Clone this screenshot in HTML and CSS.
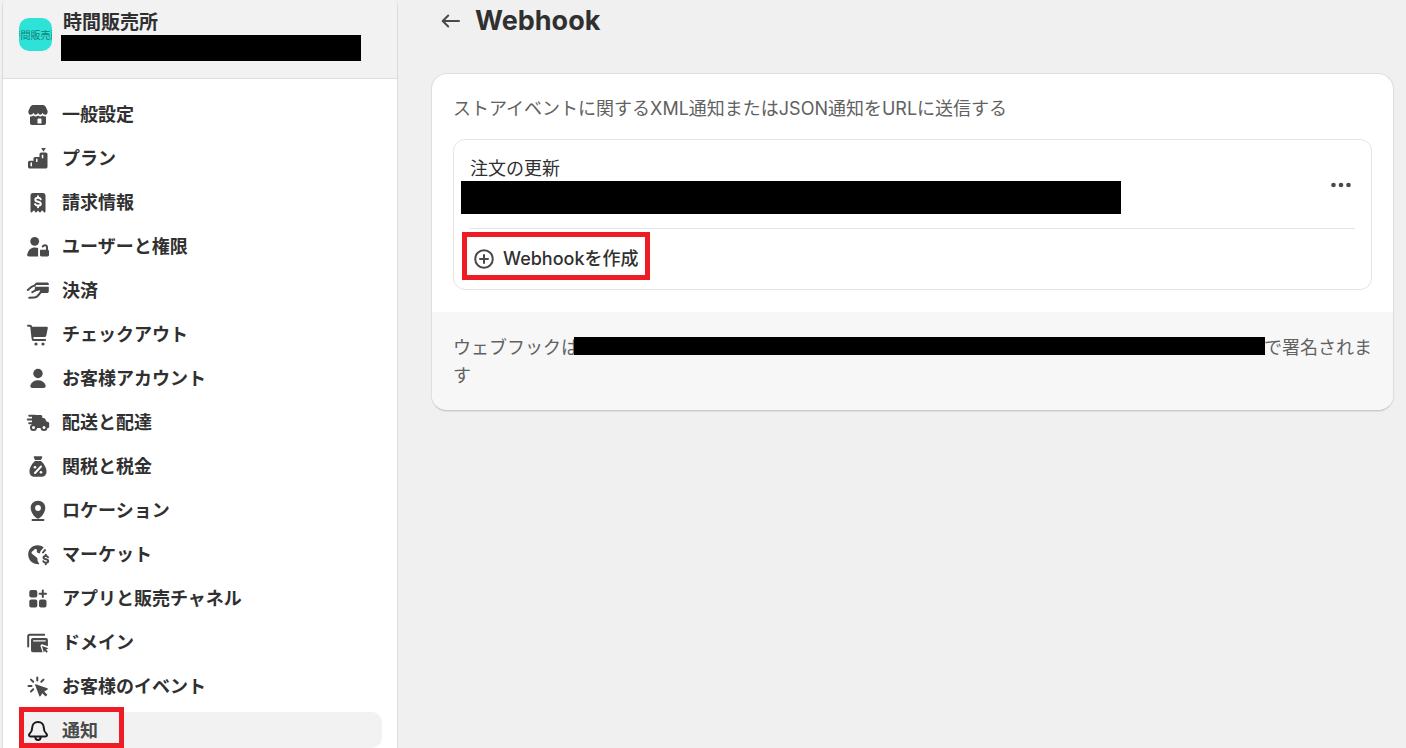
FILE: index.html
```html
<!DOCTYPE html>
<html lang="ja">
<head>
    <meta charset="UTF-8">
    <meta name="viewport" content="width=device-width, initial-scale=1.0">
    <title>Webhook</title>
    <link rel="stylesheet" href="styles.css">
</head>
<body>

<div class="layout">
    <aside class="sidebar">
        <div class="store">
            <div class="avatar"><span>時間販売所</span></div>
            <div class="store-info">
                <div class="store-name">時間販売所</div>
                <div class="mask mask-store"></div>
            </div>
        </div>

        <!-- Settings menu -->
        <nav class="menu">
            <a class="menu-item" href="#">
                <svg class="icon" viewBox="0 0 24 24"><path d="M8 3h8c1.800 0 3 .6 3.800 2l1.600 3.400c.8 2-.3 4.400-2.300 4.400-1.200 0-2-.7-2.500-2-.6 1.300-1.300 2-2.300 2s-1.800-.7-2.300-2c-.5 1.300-1.300 2-2.300 2s-1.700-.7-2.300-2c-.5 1.300-1.300 2-2.500 2-2 0-3.100-2.400-2.300-4.400L4.200 5C5 3.600 6.200 3 8 3z"/><path fill-rule="evenodd" d="M4 14.500c1.500.2 2.600-.2 3.400-1 1.400 1.300 3.200 1.300 4.600 0 1.400 1.300 3.200 1.300 4.600 0 .8.800 1.900 1.200 3.400 1V21c0 1.200-.8 2-2 2H6c-1.200 0-2-.8-2-2zM12.500 16.500c-.6 0-1 .4-1 1v4H15.500v-4c0-.6-.4-1-1-1z"/></svg>
                一般設定
            </a>
            <a class="menu-item" href="#">
                <svg class="icon" viewBox="0 0 24 24"><path d="M15.200 2h4.600l-2.300 3.800z"/><path fill-rule="evenodd" d="M2 16.500c0-1.100.7-1.800 1.800-1.800h3.700v-2c0-1.100.7-1.800 1.800-1.800h4.200V8.300c0-1.100.7-1.800 1.800-1.800h4.400c1.100 0 1.800.7 1.800 1.800v12.400c0 1.100-.7 1.800-1.800 1.800H3.800c-1.100 0-1.800-.7-1.800-1.800zM4.500 16.600v3.600h1.500v-3.600zM10 12.800v3.200h1.500v-3.200zM15.800 8.700v3.600h1.500v-3.600z"/></svg>
                プラン
            </a>
            <a class="menu-item" href="#">
                <svg class="icon" viewBox="0 0 24 24"><path d="M7 3h10c1.500 0 2.500 1 2.500 2.500v16.100c0 .8-.8 1.200-1.400.7L16 20.300l-1.500 2c-.3.400-.8.400-1.100 0L12 20.500l-1.400 1.800c-.3.400-.8.400-1.100 0l-1.500-2-2.100 2c-.6.500-1.400.1-1.400-.7V5.500C4.500 4 5.500 3 7 3z"/><path class="cut-line" d="M14.800 9.300c-.4-1-1.400-1.500-2.800-1.500-1.600 0-2.700.7-2.700 1.900 0 2.900 5.500 1.100 5.500 4 0 1.200-1.200 1.900-2.800 1.900-1.400 0-2.500-.5-2.900-1.500M12 6.200v1.500M12 15.700v1.500"/></svg>
                請求情報
            </a>
            <a class="menu-item" href="#">
                <svg class="icon" viewBox="0 0 24 24"><circle cx="8.700" cy="7.300" r="4.400"/><path d="M8.800 13.500c1.400 0 2.500.2 3.300.6v8.400H3c-1.300 0-2.100-1-1.800-2.100 1-4.200 3.900-6.900 7.600-6.900z"/><path d="M14.600 15.700h7c.8 0 1.400.6 1.400 1.400v4c0 .8-.6 1.400-1.400 1.400h-6.200c-.8 0-1.400-.6-1.400-1.400v-4c0-.8.200-1.400.6-1.400z"/><path class="line" d="M21 16v-2.500c0-1.300-.9-2.200-2.200-2.200-1 0-1.700.5-2.100 1.200"/></svg>
                ユーザーと権限
            </a>
            <a class="menu-item" href="#">
                <svg class="icon" viewBox="0 0 24 24"><path d="M10.800 4.500h10.500c.9 0 1.500.6 1.500 1.400v1.200H8.200c.7-1.700 1.500-2.600 2.600-2.600zM9 8.800h13.800v4.400c0 1.100-.7 1.800-1.800 1.800h-7.500l.8-3.300-5.800 1.500z"/><path class="line" d="M1.800 12l3.500-2.900c1.200-1 2.300-1.500 3.700-1.700M6.300 14.200l3.300-1.800 6.300-1.500c1-.2 1.200.6.7 1.200l-5 5.900c-.8.900-1.700 1.400-3 1.400l-5.300.4"/></svg>
                決済
            </a>
            <a class="menu-item" href="#">
                <svg class="icon" viewBox="0 0 24 24"><path d="M5 4.800h15.700c.8 0 1.300.7 1.100 1.500l-1.500 7.200c-.2.900-.9 1.500-1.800 1.500H6.800z"/><path class="line" d="M2 3.700h1.700c.9 0 1.500.6 1.600 1.400l1.300 11.700c.1.800.7 1.300 1.500 1.300h11"/><circle cx="10" cy="22" r="1.600"/><circle cx="17" cy="22" r="1.600"/></svg>
                チェックアウト
            </a>
            <a class="menu-item" href="#">
                <svg class="icon" viewBox="0 0 24 24"><circle cx="12" cy="7.500" r="4.700"/><path d="M12 14.300c4 0 6.700 2 7.600 5 .4 1.500-.5 2.700-2 2.700H6.400c-1.500 0-2.400-1.200-2-2.700.9-3 3.600-5 7.600-5z"/></svg>
                お客様アカウント
            </a>
            <a class="menu-item" href="#">
                <svg class="icon" viewBox="0 0 24 24"><path d="M6 5h8.500c1.100 0 1.800.7 1.800 1.700V8h1.200c.8 0 1.300.3 1.700 1l1.300 2.400 1.700.7c.7.300 1 .8 1 1.500v2.800c0 1.100-.7 1.700-1.600 1.700h-14c-.9 0-1.600-.6-1.600-1.700z"/><path class="line" d="M3.200 5.800H9M1.800 9.500H8M3.200 13.200H7"/><g class="wheel"><circle cx="7.500" cy="17.500" r="2.500"/><circle cx="18" cy="17.500" r="2.500"/></g></svg>
                配送と配達
            </a>
            <a class="menu-item" href="#">
                <svg class="icon" viewBox="0 0 24 24"><path d="M8.600 2.300h6.800c.7 0 1.100.6.800 1.200L14.900 6H9.100L7.800 3.500c-.3-.6.1-1.200.8-1.200zM9 7h6c2.700 2.400 5.500 6.500 5.500 10.500 0 3.300-2 5.300-5.300 5.300H8.800c-3.300 0-5.300-2-5.300-5.300C3.500 13.500 6.300 9.400 9 7z"/><path class="cut-line" d="M15 12.500l-6 6.500"/><circle class="cut" cx="9" cy="13.300" r="1.300"/><circle class="cut" cx="15" cy="18.200" r="1.300"/></svg>
                関税と税金
            </a>
            <a class="menu-item" href="#">
                <svg class="icon" viewBox="0 0 24 24"><path fill-rule="evenodd" d="M12 2.800c4.200 0 7.300 3.100 7.300 7 0 4.200-3 8.300-5.800 10.300-.9.700-2.100.7-3 0-2.800-2-5.800-6.100-5.800-10.300 0-3.900 3.100-7 7.300-7zm0 4.300a2.900 2.900 0 1 0 0 5.800 2.900 2.900 0 0 0 0-5.800z"/><path class="line" d="M6.500 22h11"/></svg>
                ロケーション
            </a>
            <a class="menu-item" href="#">
                <svg class="icon" viewBox="0 0 24 24"><path d="M11.500 3.200c2.600 0 4.500.8 6.200 2.300L15 8.500c-.5.500-.7.900-.7 1.500 0 1.200-1 1.600-2 1.100-1.200-.6-1.700-1.500-1.500-2.700.2-1-.2-1.500-1.300-1.500-1.400 0-1.500 1.500-2.700 2-1.500.7-1.800 2-.5 3.200l2.500 1.800c1.500 1 2.700 1.800 2.700 3.300 0 1.300.2 2.300 1 3.200l.7 1.800c-6.500.4-11-4-11-9.700 0-5.300 4-9.300 9.300-9.300z"/><path class="line" d="M19 8l-2 2.500M22 15.300c-.3-.9-1.200-1.300-2.300-1.300-1.300 0-2.200.6-2.200 1.600 0 2.400 4.700 1 4.700 3.400 0 1-1 1.700-2.400 1.700-1.200 0-2.200-.5-2.500-1.400M19.800 12.700V14M19.800 20.700v1.500"/></svg>
                マーケット
            </a>
            <a class="menu-item" href="#">
                <svg class="icon" viewBox="0 0 24 24"><rect x="3.300" y="4" width="8" height="7.500" rx="2"/><rect x="3.300" y="13.500" width="8" height="8" rx="2"/><rect x="13" y="13.500" width="7.500" height="8" rx="2"/><path class="line" d="M16.800 4.500v6.400M13.600 7.700H20"/></svg>
                アプリと販売チャネル
            </a>
            <a class="menu-item" href="#">
                <svg class="icon" viewBox="0 0 24 24"><path class="line" d="M2.200 16.500V6.300c0-1 .6-1.500 1.500-1.500h14.500"/><path fill-rule="evenodd" d="M7 8h13c1.100 0 1.900.8 1.900 1.900v6.300l-5-1.800c-1.600-.5-2.800.6-2.300 2.200l2 5.600H7c-1.200 0-2-.8-2-2V10c0-1.200.8-2 2-2zm.2 2.200v1.300h12.500v-1.300z"/><path d="M16 16l6.500 2.300-2.400 1.200 1.700 2-1.300 1.200-1.800-1.900-.8 1.900z"/></svg>
                ドメイン
            </a>
            <a class="menu-item" href="#">
                <svg class="icon" viewBox="0 0 24 24"><path d="M9.800 10.200l11.500 4.100c.7.300.7 1 .1 1.400l-3.200 1.800 3.200 3.300-1.800 1.700-3.300-3.300-1.600 2.800c-.4.700-1.200.6-1.400-.1L9.100 11c-.2-.5.200-1 .7-.8z"/><path class="line" d="M11.300 3.500v3M5 5.600l2.200 2.200M17.500 5.600l-2.200 2.200M2.500 12h3M7.200 15.300L5 17.500"/></svg>
                お客様のイベント
            </a>
            <a class="menu-item active" href="#">
                <svg class="icon" viewBox="0 0 24 24"><path class="line" d="M12 4c-3.600 0-5.800 2.500-5.800 5.800 0 2.600-.7 4.200-2.400 5.700-1.400 1.200-.9 2.900.8 2.900h14.800c1.700 0 2.200-1.700.8-2.900-1.700-1.500-2.400-3.100-2.400-5.700C17.800 6.500 15.600 4 12 4zM9.300 18.800c0 2 1 3.200 2.700 3.200s2.700-1.200 2.700-3.200"/></svg>
                通知
            </a>
        </nav>
    </aside>

    <main class="content">
        <div class="page-title">
            <a class="back" href="#" aria-label="戻る">
                <svg class="back-icon" viewBox="0 0 20 20"><path class="line" d="M18 10H2M7.200 4.500L1.700 10l5.500 5.500"/></svg>
            </a>
            <h1>Webhook</h1>
        </div>

        <section class="card">
            <div class="card-body">
                <p>ストアイベントに関するXML通知またはJSON通知をURLに送信する</p>
                <div class="webhooks">
                    <div class="webhook">
                        <div class="webhook-info">
                            <div class="webhook-name">注文の更新</div>
                            <div class="mask mask-webhook"></div>
                        </div>
                        <button class="more" type="button" aria-label="その他">
                            <svg class="icon" viewBox="0 0 24 24"><circle cx="4.500" cy="12" r="2.300"/><circle cx="12" cy="12" r="2.300"/><circle cx="19.500" cy="12" r="2.300"/></svg>
                        </button>
                    </div>
                    <button class="create" type="button">
                        <svg class="create-icon" viewBox="0 0 20 20"><path class="line" d="M10 1.200a8.800 8.800 0 1 0 0 17.600 8.800 8.800 0 0 0 0-17.600zM10 6v8M6 10h8"/></svg>
                        Webhookを作成
                    </button>
                </div>
            </div>
            <div class="card-footer">
                ウェブフックは<span class="mask mask-key"></span>で署名されます
            </div>
        </section>
    </main>
</div>

</body>
</html>
```
FILE: styles.css
```css
* {
    box-sizing: border-box;
}

body {
    margin: 0;
    background-color: #f0f0f0;
    color: #303030;
    font-family: Inter, "Noto Sans CJK JP", sans-serif;
    font-size: 18px;
    line-height: 28px;
}

.layout {
    display: flex;
    min-height: 100vh;
}

.sidebar {
    flex: 0 0 396px;
    margin-left: 2px;
    background-color: white;
    border: 1px solid #dcdcdc;
    border-width: 0 1px;
    border-radius: 6px 6px 0 0;
}

.store {
    display: flex;
    align-items: flex-start;
    gap: 9px;
    padding: 11px 16px 17px;
    background-color: #f2f2f2;
    border-bottom: 1px solid #dedede;
    border-radius: 6px 6px 0 0;
}

.avatar {
    display: flex;
    align-items: center;
    justify-content: center;
    width: 33px;
    height: 33px;
    margin-top: 7px;
    overflow: hidden;
    border-radius: 10px;
    background-color: #2de2d6;
    color: #17817a;
    font-size: 10px;
    white-space: nowrap;
}

.store-name {
    padding-left: 2px;
    line-height: 24px;
    font-size: 19px;
    font-weight: 600;
}

/* blacked out values */
.mask {
    background-color: black;
}

.mask-store {
    width: 300px;
    height: 26px;
}

.mask-webhook {
    width: 660px;
    height: 33px;
}

.mask-key {
    position: relative;
    display: inline-block;
    width: 691px;
    height: 18px;
    margin: 0 -1px 0 -5px;
    vertical-align: -1px;
}

.icon {
    flex: none;
    width: 24px;
    height: 24px;
    fill: #4a4a4a;
    stroke: none;
}

.line {
    fill: none;
    stroke: #4a4a4a;
    stroke-width: 2;
    stroke-linecap: round;
    stroke-linejoin: round;
}

.cut {
    fill: white;
}

.cut-line {
    fill: none;
    stroke: white;
    stroke-width: 2;
    stroke-linecap: round;
}

.wheel {
    fill: white;
    stroke: #4a4a4a;
    stroke-width: 2;
}

.menu {
    display: flex;
    flex-direction: column;
    gap: 8px;
    padding: 17px 15px 0 16px;
}

.menu-item {
    position: relative;
    display: flex;
    align-items: center;
    gap: 12px;
    height: 36px;
    padding: 2px 7px 0;
    border-radius: 10px;
    color: #303030;
    font-weight: 600;
    text-decoration: none;
}

.menu-item .icon {
    margin-bottom: 2px;
}

.active {
    background-color: #f2f2f2;
    color: #4a4a4a;
}

.active .line {
    stroke: #1a1a1a;
}

/* red frames */
.active::after,
.create::after {
    content: "";
    position: absolute;
    border: 5px solid #ee1c25;
}

.active::after {
    top: -5px;
    bottom: 0;
    left: 0;
    width: 95px;
}

.create::after {
    top: 3px;
    right: -12px;
    bottom: 9px;
    left: -8px;
}

.content {
    flex: 1;
    min-width: 0;
    padding: 5px 12px 0 34px;
}

.page-title {
    display: flex;
    align-items: center;
    gap: 14px;
    padding-left: 9px;
    margin-bottom: 36px;
}

.back,
.back-icon,
.create-icon {
    display: block;
    width: 20px;
    height: 20px;
}

h1 {
    margin: 0;
    font-size: 27px;
    line-height: 32px;
    font-weight: 700;
}

.card {
    overflow: hidden;
    margin-left: -1px;
    background-color: white;
    border: 1px solid #dedede;
    border-bottom-color: #c8c8c8;
    border-radius: 16px;
    box-shadow: 0 1px 1px #dedede;
}

.card-body {
    padding: 21px 21px 22px;
    color: #616161;
}

.card-body p {
    margin: 0 0 16px;
}

.webhooks {
    padding: 0 16px;
    border: 1px solid #e3e3e3;
    border-radius: 12px;
}

.webhook {
    display: flex;
    align-items: center;
    justify-content: space-between;
    padding: 17px 0 14px;
    border-bottom: 1px solid #e3e3e3;
}

.webhook-info {
    margin-left: -9px;
}

.webhook-name {
    padding-left: 9px;
    line-height: 24px;
    color: #303030;
}

button {
    padding: 0;
    border: none;
    background: none;
    color: #303030;
    font: inherit;
    cursor: pointer;
}

.more {
    display: flex;
    margin: 0 2px 2px 0;
}

.create {
    position: relative;
    display: flex;
    align-items: center;
    gap: 9px;
    height: 60px;
    padding-left: 4px;
    font-weight: 550;
}

.card-footer {
    padding: 22px 21px 20px;
    background-color: #f7f7f7;
    color: #616161;
}
```
